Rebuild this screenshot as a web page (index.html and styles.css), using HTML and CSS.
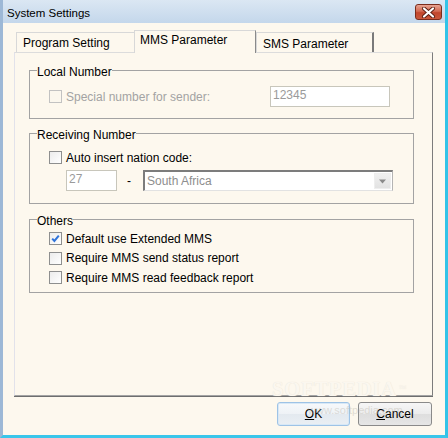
FILE: index.html
```html
<!DOCTYPE html>
<html>
<head>
<meta charset="utf-8">
<link rel="stylesheet" href="styles.css">
</head>
<body>
<div class="window">
  <div class="titlebar">
    <span class="title">System Settings</span>
    <span class="close">
      <svg width="15" height="11" viewBox="0 0 15 11"><path d="M3 1.5 L12 9.5 M12 1.5 L3 9.5" stroke="#5a1e12" stroke-width="4" stroke-linecap="round"/><path d="M3 1.5 L12 9.5 M12 1.5 L3 9.5" stroke="#ffffff" stroke-width="2.2" stroke-linecap="round"/></svg>
    </span>
  </div>
  <div class="content">
    <div class="tabs">
      <div class="tab tab-first">Program Setting</div>
      <div class="tab tab-active">MMS Parameter</div>
      <div class="tab tab-last">SMS Parameter</div>
    </div>
    <div class="panel">
      <fieldset class="group">
        <legend>Local Number</legend>
        <div class="group-body body-local">
          <div class="row">
            <div class="check-item check-wide disabled">
              <span class="box box-disabled"></span>
              <span class="label">Special number for sender:</span>
            </div>
            <div class="textbox tb-local">12345</div>
          </div>
        </div>
      </fieldset>
      <fieldset class="group group-recv">
        <legend>Receiving Number</legend>
        <div class="group-body body-recv">
          <div class="check-item">
            <span class="box"></span>
            <span class="label">Auto insert nation code:</span>
          </div>
          <div class="row row-code">
            <div class="textbox tb-code">27</div>
            <span class="dash">-</span>
            <div class="combo">
              <span class="combo-text">South Africa</span>
              <span class="combo-btn"><svg width="9" height="5" viewBox="0 0 9 5"><path d="M1 0.5 H8 L4.5 4.5 Z" fill="#8a8a8a"/></svg></span>
            </div>
          </div>
        </div>
      </fieldset>
      <fieldset class="group group-others">
        <legend>Others</legend>
        <div class="group-body body-others">
          <div class="check-item">
            <span class="box box-checked"><svg width="11" height="11" viewBox="0 0 11 11"><path d="M2.2 5.6 L4.4 8 L8.8 2.6" stroke="#2f73d9" stroke-width="2" fill="none"/></svg></span>
            <span class="label">Default use Extended MMS</span>
          </div>
          <div class="check-item">
            <span class="box"></span>
            <span class="label">Require MMS send status report</span>
          </div>
          <div class="check-item">
            <span class="box"></span>
            <span class="label">Require MMS read feedback report</span>
          </div>
        </div>
      </fieldset>
    </div>
    <div class="buttons">
      <button class="btn btn-default"><u>O</u>K</button>
      <button class="btn"><u>C</u>ancel</button>
    </div>
    <div class="watermark">SOFTPEDIA<sup>™</sup></div>
    <div class="watermark-url">www.softpedia.com</div>
  </div>
</div>
</body>
</html>
```
FILE: styles.css
```css
* { box-sizing: border-box; }
html, body { margin: 0; padding: 0; }
body { background: #fdf8ee; }

.window {
  width: 448px;
  height: 438px;
  display: flex;
  flex-direction: column;
  background: #fdf8ee;
  border-left: 3px solid #9db8d6;
  border-right: 3px solid #32c4e8;
  border-bottom: 3px solid #3ac6ea;
  font-family: "Liberation Sans", Arial, sans-serif;
  font-size: 12px;
  color: #000;
}

.titlebar {
  height: 23px;
  flex: none;
  display: flex;
  justify-content: space-between;
  align-items: flex-start;
  padding-left: 4px;
  background: linear-gradient(#dbe7f3, #c4d7eb);
}
.title {
  font-size: 11.5px;
  line-height: 14px;
  margin-top: 6px;
  color: #000;
}
.close {
  width: 27px;
  height: 16px;
  margin-top: 4px;
  margin-right: 3px;
  border: 1px solid #7a2c1c;
  border-radius: 3px;
  background: linear-gradient(#e8a493 0%, #d36a52 45%, #c2462c 55%, #c9583c 100%);
  display: flex;
  align-items: center;
  justify-content: center;
}

.content {
  flex: 1;
  display: flex;
  flex-direction: column;
  padding: 7px 12px 0 11px;
  position: relative;
}

.tabs {
  height: 22px;
  flex: none;
  display: flex;
  align-items: flex-end;
  padding-left: 2px;
}
.tab {
  height: 20px;
  border-top: 1px solid #d8d8d8;
  border-left: 1px solid #d8d8d8;
  background: #fdf8ee;
  line-height: 14px;
  padding-top: 3px;
  white-space: nowrap;
}
.tab-first {
  width: 118px;
  padding-left: 6px;
}
.tab-active {
  width: 122px;
  height: 23px;
  margin-bottom: -1px;
  padding-left: 5px;
  padding-top: 2px;
  border-right: 1px solid #8a8a8a;
  position: relative;
  z-index: 2;
}
.tab-last {
  width: 118px;
  padding-left: 6px;
  padding-top: 4px;
  border-right: 2px solid #7a7a7a;
}

.panel {
  flex: 1;
  border-top: 1px solid #dcdcdc;
  border-left: 1px solid #e2e2ea;
  border-right: 1px solid #7c7c7c;
  border-bottom: 1px solid #a4a4a4;
  box-shadow: 0 1px 0 #6e6e6e;
  padding: 8px 18px 0 14px;
}

.group {
  margin: 0;
  padding: 0;
  min-width: 0;
  border: 1px solid #a3a3a3;
}
.group legend {
  padding: 4px 0 0 0;
  margin-left: 7px;
  line-height: 14px;
  font-size: 12px;
}
.group-recv { margin-top: 5px; }
.group-others { margin-top: 6px; }

.group-body { padding-left: 19px; }
.body-local { padding-top: 7px; padding-bottom: 11px; }
.body-recv { padding-top: 9px; padding-bottom: 12px; }
.body-others {
  padding-top: 4px;
  padding-bottom: 8px;
  display: flex;
  flex-direction: column;
  gap: 6.5px;
}

.row {
  display: flex;
  align-items: center;
  height: 21px;
}
.check-item {
  display: flex;
  align-items: center;
  height: 13px;
}
.check-wide { width: 221px; }
.label {
  margin-left: 4px;
  line-height: 14px;
  white-space: nowrap;
}
.disabled .label { color: #a3a3a3; }

.box {
  width: 13px;
  height: 13px;
  flex: none;
  border: 1px solid #8e8f8f;
  background: linear-gradient(135deg, #ececec, #ffffff);
  display: flex;
  align-items: center;
  justify-content: center;
}
.box-disabled {
  border-color: #c2c2c2;
  background: #fbf7ee;
}

.textbox {
  height: 21px;
  border: 1px solid #c8c6bb;
  background: #fff;
  color: #9a9a9a;
  line-height: 17px;
  padding-left: 2px;
}
.tb-local { width: 120px; }
.tb-code {
  width: 51px;
  margin-left: 17px;
}
.row-code { margin-top: 6px; }
.dash {
  margin-left: 10px;
  margin-right: 12px;
  width: 4px;
  line-height: 14px;
}
.combo {
  width: 250px;
  height: 21px;
  border-top: 2px solid #7c7c7c;
  border-left: 2px solid #7c7c7c;
  border-right: 1px solid #b4b4b4;
  border-bottom: 1px solid #e2e2e2;
  background: #fff;
  display: flex;
  align-items: center;
  justify-content: space-between;
  padding-right: 1px;
}
.combo-text {
  color: #8e8e8e;
  padding-left: 2px;
  line-height: 14px;
}
.combo-btn {
  width: 17px;
  height: 16px;
  background: linear-gradient(#f0f0f0, #e2e2e2);
  border: 1px solid #eeeeee;
  display: flex;
  align-items: center;
  justify-content: center;
}

.buttons {
  flex: none;
  display: flex;
  justify-content: flex-end;
  gap: 8px;
  margin-top: 6px;
  margin-bottom: 9px;
  margin-right: 1px;
  height: 24px;
}
.btn {
  width: 74px;
  height: 24px;
  font-family: "Liberation Sans", Arial, sans-serif;
  font-size: 12px;
  color: #000;
  border: 1px solid #8a8a8a;
  border-radius: 3px;
  background: linear-gradient(#f6f6f6 0%, #ececec 50%, #dedede 51%, #e6e6e6 100%);
  padding: 0;
  margin: 0;
}
.btn-default {
  width: 73px;
  border-color: #9ec3e6;
  background: linear-gradient(#f7f9fb 0%, #eef2f6 50%, #e3e9ef 51%, #eaeff4 100%);
  box-shadow: inset 0 0 0 1px #d8e8f6;
}

.watermark {
  position: absolute;
  left: 269px;
  top: 355px;
  font-family: "Liberation Serif", "Times New Roman", serif;
  font-weight: bold;
  font-size: 21px;
  letter-spacing: 0.5px;
  color: #fbf7ef;
  text-shadow: 0 0 1px #e4dfd5;
  line-height: 22px;
}
.watermark sup {
  font-size: 8px;
  font-weight: normal;
  vertical-align: top;
  margin-left: 2px;
}
.watermark-url {
  position: absolute;
  left: 305px;
  top: 381px;
  font-size: 11px;
  color: rgba(190, 185, 175, 0.45);
  line-height: 12px;
}
```
